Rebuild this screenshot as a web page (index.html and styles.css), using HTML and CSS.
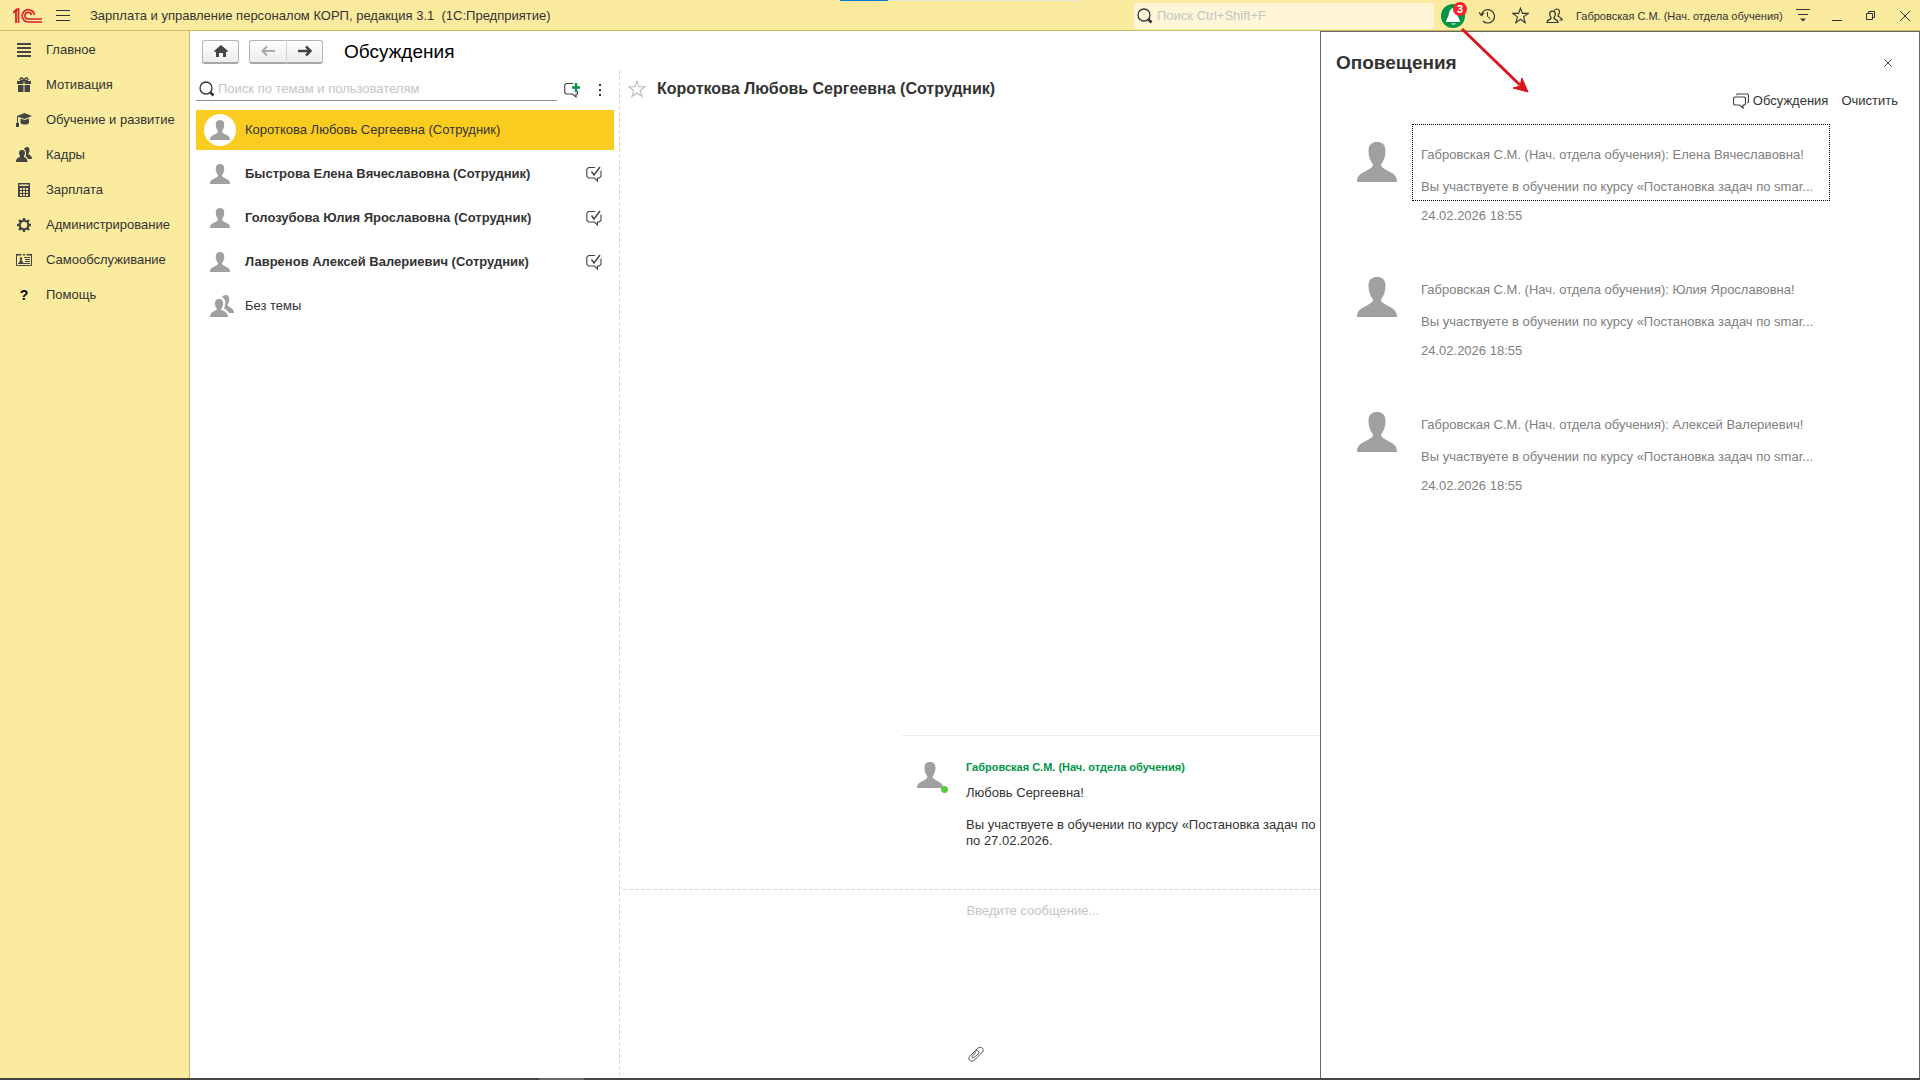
FILE: index.html
```html
<!DOCTYPE html>
<html lang="ru">
<head>
  <meta charset="UTF-8">
  <meta name="viewport" content="width=device-width, initial-scale=1.0">
  <title>Зарплата и управление персоналом КОРП, редакция 3.1</title>
  <link rel="stylesheet" href="styles.css">
</head>
<body>
  <svg class="sprite" aria-hidden="true">
    <symbol id="person" viewBox="0 0 40 40">
      <path d="M20 0c5 0 8.500 2.500 8.500 9c0 6-2 10-4.500 13.500c0 2 1.500 3.500 4.500 5C36 31.500 40 33 40 40H0c0-7 4-8.500 11.500-12.500c3-1.500 4.500-3 4.500-5c-2.500-3.500-4.500-7.500-4.500-13.500c0-6.500 3.500-9 8.500-9z"/>
    </symbol>
    <symbol id="loupe" viewBox="0 0 16 16">
      <circle cx="7" cy="7" r="6" fill="none" stroke="currentColor" stroke-width="1.300"/>
      <path d="M11.500 11.500L14.500 14.500" stroke="currentColor" stroke-width="2.500"/>
    </symbol>
    <symbol id="star" viewBox="0 0 16 16">
      <path d="M8 1l1.800 5h5.400l-4.300 3.300l1.500 5.400L8 11.500l-4.400 3.200l1.500-5.400L.8 6h5.400z" fill="none" stroke="currentColor"/>
    </symbol>
    <symbol id="bubble-check" viewBox="0 0 16 16">
      <path d="M9 1.500H2.500L.8 3.200V10.300L2.500 12H8.500L11.500 15V12H13.300L15 10.300V4.500" fill="none" stroke="currentColor" stroke-width="1.100"/>
      <path d="M5.500 5.500l2.500 3.500L14 1" fill="none" stroke="currentColor" stroke-width="1.500"/>
    </symbol>
  </svg>

  <header class="titlebar">
    <svg class="logo" viewBox="0 0 30 16" fill="none" stroke="#d8232a">
      <path d="M0 5l3-3v13M3 2.500L5.500 1v14" stroke-width="1.800"/>
      <path d="M21.500 7A6.200 6.200 0 1 0 15 14H29" stroke-width="1.700"/>
      <path d="M18.500 7A3.300 3.300 0 1 0 15 11H29" stroke-width="1.700"/>
    </svg>
    <button class="icon-btn menu-btn" aria-label="Главное меню">
      <svg width="14" height="12" viewBox="0 0 14 12"><path d="M0 .5h14M0 5.500h14M0 10.500h14" stroke="#333"/></svg>
    </button>
    <span class="app-name">Зарплата и управление персоналом КОРП, редакция 3.1&nbsp; (1С:Предприятие)</span>
    <div class="progress"><span></span></div>
    <label class="global-search">
      <svg width="16" height="16"><use href="#loupe"/></svg>
      <input type="text" placeholder="Поиск Ctrl+Shift+F" aria-label="Поиск">
    </label>
    <div class="title-tools">
      <button class="bell" aria-label="Оповещения">
        <svg width="24" height="24" viewBox="0 0 24 24">
          <circle cx="12" cy="12" r="12" fill="#009646"/>
          <path d="M12 4c-3 1-4 4-4.500 7.500L5 17v1h14v-1l-2.500-5.500C16 8 15 5 12 4zM10 19.500h5c-1 1.500-4 1.500-5 0z" fill="#fff"/>
        </svg>
        <span class="badge">3</span>
      </button>
      <button class="icon-btn" aria-label="История">
        <svg width="16" height="16" viewBox="0 0 16 16" fill="none" stroke="#333">
          <path d="M2.500 6A6.700 6.700 0 1 1 4 13" stroke-width="1.200"/><path d="M0 4.500l2.500 3L5 5" stroke-width="1.200"/><path d="M8.500 4v4.500l3 2.500"/>
        </svg>
      </button>
      <button class="icon-btn" aria-label="Избранное"><svg width="17" height="17"><use href="#star"/></svg></button>
      <button class="icon-btn" aria-label="Пользователи">
        <svg width="17" height="16" viewBox="0 0 17 16" fill="none" stroke="#333" stroke-width="1.200">
          <path d="M6.500 3.200c2 0 2.800 1 2.800 2.800S8.500 9 8 9.500v1.200c3 1.300 4 1.600 4 3.800H1c0-2.200 1-2.500 4-3.800V9.500C4.500 9 3.700 7.800 3.700 6s.8-2.800 2.800-2.800z"/>
          <path d="M8 2.500C8.600 1.500 9.500 1 10.800 1c2 0 2.700 1.300 2.700 3s-.8 2.500-1.300 3v1.500c2.500 1.200 4 1.500 4 3.500H13.500"/>
        </svg>
      </button>
      <a class="user" href="#">Габровская С.М. (Нач. отдела обучения)</a>
      <button class="icon-btn" aria-label="Настройки">
        <svg width="14" height="13" viewBox="0 0 14 13"><path d="M0 .5h14M2 5.500h10" stroke="#333"/><path d="M4 9.500h6l-3 3z" fill="#333"/></svg>
      </button>
    </div>
    <div class="window-tools">
      <button class="icon-btn" aria-label="Свернуть"><svg width="10" height="10"><path d="M0 9.500h10" stroke="#333"/></svg></button>
      <button class="icon-btn" aria-label="Развернуть"><svg width="10" height="10" fill="none" stroke="#333"><path d="M.5 2.500h6v6h-6zM2.500 2.500v-2h6v6h-2"/></svg></button>
      <button class="icon-btn" aria-label="Закрыть"><svg width="10" height="10"><path d="M0 0l10 10M10 0L0 10" stroke="#333"/></svg></button>
    </div>
  </header>

  <div class="workspace">
    <nav class="sections">
      <a href="#">
        <svg viewBox="0 0 16 16"><path d="M1 2h14M1 6h14M1 10h14M1 14h14" stroke="#444" stroke-width="2"/></svg>Главное</a>
      <a href="#">
        <svg viewBox="0 0 16 16"><path d="M1 4h6.500v3H1zM8.500 4H15v3H8.500zM2 8h5.500v7H2zM8.500 8H14v7H8.500z"/><path d="M7.500 3.500C5 4 3.500 3 4.500 1.500S7 1.500 8 3.500c1-2 2.500-3.500 3.500-2S11 4 8.500 3.500" fill="none" stroke="#444" stroke-width="1.500"/></svg>Мотивация</a>
      <a href="#">
        <svg viewBox="0 0 16 16"><path d="M8.500 1L16 4l-7.500 3L2 4.800V11h1v4H0v-4h1V4z"/><path d="M4.500 6.500l4 1.500l4.500-1.500V11c-1.500 2-6.500 2-8.500 0z"/></svg>Обучение и развитие</a>
      <a href="#">
        <svg viewBox="0 0 16 16"><path d="M6 3c2.200 0 3 1.300 3 3S8 8.500 8 9v1c2.500 1 3.500 2 3.500 5H0c0-3 1-4 4-5V9C4 8.500 3 7.700 3 6s.8-3 3-3z"/><path d="M8 2c.5-1 1.500-2 3-2c2 0 2.500 1.500 2.500 3S13 5.500 12.500 6.500v1c2.500 1 3.500 2 3.500 4.500h-4c-.5-1.500-1.500-2-2.500-2.700C10.500 7 10.500 3.500 8 2z"/></svg>Кадры</a>
      <a href="#">
        <svg viewBox="0 0 16 16"><path d="M2 1h12v14H2z"/><path d="M3.500 2.500h9v1.500h-9zM4 6h2v2H4zM7 6h2v2H7zM10 6h2v2h-2zM4 9h2v2H4zM7 9h2v2H7zM10 9h2v2h-2zM4 12h2v2H4zM7 12h2v2H7zM10 12h2v2h-2z" fill="#fbeb9e"/></svg>Зарплата</a>
      <a href="#">
        <svg viewBox="0 0 16 16" fill="none" stroke="#444"><circle cx="8" cy="8" r="4.300" stroke-width="2.200"/><path d="M8 1v2.500M8 12.500V15M1 8h2.500M12.500 8H15M3 3l1.800 1.800M11.200 11.200L13 13M13 3l-1.800 1.800M4.800 11.200L3 13" stroke-width="2.400"/></svg>Администрирование</a>
      <a href="#">
        <svg viewBox="0 0 16 16"><path d="M.5 3v10.500h15V3M8 5.500h6M9 7.500h5M9 9.500h5M2 11.500h12" fill="none" stroke="#444"/><path d="M3 11c0-2 1-2 1.500-2.500C3.500 7.500 3.500 5 5 5s1.500 2.500.500 3.500C6 9 7 9 7 11zM0 2h5.500v1.500H0zM7 2h2v1.500H7zM10.500 2H16v1.500h-5.500z"/></svg>Самообслуживание</a>
      <a href="#"><b>?</b>Помощь</a>
    </nav>

    <main class="page">
      <div class="page-head">
        <button class="tool-btn" aria-label="Домой"><svg width="14" height="14" viewBox="0 0 14 14"><path d="M7 1l7 6l-1 1.200L12 7.500V13H9V9H5v4H2V7.500L1 8.200L0 7z" fill="#444"/></svg></button>
        <div class="tool-group">
          <button class="tool-btn" aria-label="Назад"><svg width="14" height="12" viewBox="0 0 14 12"><path d="M6 1.500L1.500 6L6 10.500M2 6h12" fill="none" stroke="#aaa" stroke-width="2"/></svg></button>
          <button class="tool-btn" aria-label="Вперед"><svg width="14" height="12" viewBox="0 0 14 12"><path d="M8 1.500l4.500 4.500L8 10.500M12 6H0" fill="none" stroke="#444" stroke-width="2.500"/></svg></button>
        </div>
        <h1>Обсуждения</h1>
      </div>

      <div class="columns">
        <section class="threads">
          <div class="thread-search">
            <label>
              <svg width="16" height="16"><use href="#loupe"/></svg>
              <input type="text" placeholder="Поиск по темам и пользователям" aria-label="Поиск по темам">
            </label>
            <button class="icon-btn" aria-label="Новое обсуждение">
              <svg width="16" height="16" viewBox="0 0 16 16"><path d="M9 1.500H2.200L.7 3v7.500L2.200 12H8.500l3.500 3v-3h1.500V9" fill="none" stroke="#444" stroke-width="1.100"/><path d="M12 1v9M8 5.500h8" stroke="#009646" stroke-width="2.400"/></svg>
            </button>
            <button class="icon-btn more" aria-label="Еще">
              <svg width="4" height="12" fill="#333"><path d="M1 0h2v2H1zM1 5h2v2H1zM1 10h2v2H1z"/></svg>
            </button>
          </div>
          <ul>
            <li class="active"><span class="face"><svg><use href="#person"/></svg></span><span>Короткова Любовь Сергеевна (Сотрудник)</span></li>
            <li class="unread"><span class="face"><svg><use href="#person"/></svg></span><span>Быстрова Елена Вячеславовна (Сотрудник)</span><svg class="mark"><use href="#bubble-check"/></svg></li>
            <li class="unread"><span class="face"><svg><use href="#person"/></svg></span><span>Голозубова Юлия Ярославовна (Сотрудник)</span><svg class="mark"><use href="#bubble-check"/></svg></li>
            <li class="unread"><span class="face"><svg><use href="#person"/></svg></span><span>Лавренов Алексей Валериевич (Сотрудник)</span><svg class="mark"><use href="#bubble-check"/></svg></li>
            <li>
              <span class="face group">
                <svg viewBox="0 0 24 22"><path d="M9 4c3 0 4 1.500 4 4.500S12 13 11 14c0 2 7 2 7 8H0c0-6 7-6 7-8C6 13 5 11.500 5 8.500S6 4 9 4z"/><path d="M12 2c1-1.300 2-2 3.500-2c3 0 3.700 2 3.700 4.500S18 8.500 17.500 10c0 2 6.500 2.500 6.500 8h-5c-1-2.500-3-3.500-5-4.500C16 9 16 4 12 2z"/></svg>
              </span>
              <span>Без темы</span>
            </li>
          </ul>
        </section>

        <section class="chat">
          <div class="chat-head">
            <button class="icon-btn" aria-label="В избранное"><svg width="18" height="18"><use href="#star"/></svg></button>
            <h2>Короткова Любовь Сергеевна (Сотрудник)</h2>
          </div>
          <div class="feed">
            <article class="message">
              <span class="avatar"><svg><use href="#person"/></svg><i></i></span>
              <div>
                <h3>Габровская С.М. (Нач. отдела обучения)</h3>
                <p>Любовь Сергеевна!<br><br>Вы участвуете в обучении по курсу «Постановка задач по<br>по 27.02.2026.</p>
              </div>
            </article>
          </div>
          <div class="composer">
            <div class="composer-inner">
              <textarea placeholder="Введите сообщение..." aria-label="Сообщение"></textarea>
              <button class="icon-btn" aria-label="Прикрепить файл">
                <svg width="18" height="18" viewBox="0 0 18 18"><path d="M5 9l5.500-5.500c3-3 7.500 0 5 3.500L7.500 15c-3 3-7.500 0-5-3.500l6-5.500c2-1.700 4.500.5 3 2.500L7 12.500c-1 1-2.500 0-1.800-1.300L9 7.500" fill="none" stroke="#555"/></svg>
              </button>
            </div>
          </div>
        </section>
      </div>
    </main>

    <aside class="alerts">
      <div class="alerts-head">
        <h2>Оповещения</h2>
        <button class="icon-btn" aria-label="Закрыть"><svg width="8" height="8"><path d="M.5 .5l7 7M7.500 .5l-7 7" stroke="#444"/></svg></button>
      </div>
      <div class="alerts-tools">
        <a href="#"><svg width="16" height="16" viewBox="0 0 16 16" fill="none" stroke="#444" stroke-width="1.200"><path d="M1.500 4h10l1 1v6l-1 1H10v3l-3.500-3h-5l-1-1V5z"/><path d="M3.500 2l1-1h10l1 1v7l-1 1"/></svg>Обсуждения</a>
        <a href="#">Очистить</a>
      </div>
      <article class="alert">
        <svg><use href="#person"/></svg>
        <div>
          <a class="alert-text focused" href="#"><span>Габровская С.М. (Нач. отдела обучения): Елена Вячеславовна!</span><span>Вы участвуете в обучении по курсу «Постановка задач по smar...</span></a>
          <time>24.02.2026 18:55</time>
        </div>
      </article>
      <article class="alert">
        <svg><use href="#person"/></svg>
        <div>
          <a class="alert-text" href="#"><span>Габровская С.М. (Нач. отдела обучения): Юлия Ярославовна!</span><span>Вы участвуете в обучении по курсу «Постановка задач по smar...</span></a>
          <time>24.02.2026 18:55</time>
        </div>
      </article>
      <article class="alert">
        <svg><use href="#person"/></svg>
        <div>
          <a class="alert-text" href="#"><span>Габровская С.М. (Нач. отдела обучения): Алексей Валериевич!</span><span>Вы участвуете в обучении по курсу «Постановка задач по smar...</span></a>
          <time>24.02.2026 18:55</time>
        </div>
      </article>
    </aside>

    <svg class="pointer" width="70" height="68" viewBox="0 0 70 68">
      <path d="M2 2L60 58" stroke="#d8181c" stroke-width="3"/>
      <path d="M68 65l-15-4l7-2l2-8z" fill="#d8181c" stroke="#d8181c"/>
    </svg>
  </div>
  <footer class="taskbar"><span></span></footer>
</body>
</html>
```
FILE: styles.css
```css
:root {
  --yellow: #fbeb9e;
  --yellow-line: #c9b964;
  --accent: #fbcc20;
  --text: #333;
  --muted: #808080;
  --hint: #c4c4c8;
  --grey: #a0a0a0;
  --line: #666;
}
* {
  box-sizing: border-box;
}
body {
  margin: 0;
  min-height: 100vh;
  display: flex;
  flex-direction: column;
  overflow: hidden;
  background: #fff;
  color: var(--text);
  font: 13px/16px "Liberation Sans", Arial, sans-serif;
}
h1, h2, h3, p, ul {
  margin: 0;
  padding: 0;
}
a {
  color: inherit;
  text-decoration: none;
}
svg {
  display: block;
  flex: none;
}
button {
  padding: 0;
  border: 0;
  background: none;
  font: inherit;
  color: inherit;
  cursor: pointer;
}
input, textarea {
  flex: 1;
  min-width: 0;
  padding: 0;
  border: 0;
  outline: 0;
  background: none;
  font: inherit;
  color: inherit;
  resize: none;
}
input::placeholder, textarea::placeholder {
  color: var(--hint);
  opacity: 1;
}
.sprite {
  position: absolute;
  width: 0;
  height: 0;
}
.icon-btn {
  display: flex;
  align-items: center;
  justify-content: center;
}

/* title bar */
.titlebar {
  position: relative;
  display: flex;
  align-items: center;
  height: 31px;
  padding: 1px 10px 0 13px;
  background: var(--yellow);
  border-bottom: 1px solid var(--yellow-line);
}
.logo {
  width: 30px;
  height: 16px;
}
.menu-btn {
  margin: 0 20px 0 13px;
}
.progress {
  position: absolute;
  top: 0;
  left: 840px;
  width: 241px;
  height: 1px;
  background: #e4e4dc;
}
.progress span {
  display: block;
  width: 20%;
  height: 1px;
  background: #0078d7;
}
.global-search {
  display: flex;
  align-items: center;
  gap: 4px;
  width: 300px;
  height: 26px;
  margin-left: auto;
  padding: 0 3px;
  border-radius: 3px;
  background: #fef6d6;
}
.title-tools {
  display: flex;
  align-items: center;
  gap: 17px;
  margin-left: 7px;
}
.title-tools .user {
  width: 206px;
  margin: 0 -3px 0 -4px;
  font-size: 11px;
  white-space: nowrap;
}
.bell {
  position: relative;
  margin-right: -3px;
}
.badge {
  position: absolute;
  top: -2px;
  left: 12px;
  width: 14px;
  height: 14px;
  border-radius: 50%;
  background: #f8252c;
  color: #fff;
  font: bold 11px/14px "Liberation Sans", Arial, sans-serif;
}
.window-tools {
  display: flex;
  gap: 24px;
  margin-left: 22px;
}

.workspace {
  position: relative;
  display: flex;
  flex: 1;
}

/* sections */
.sections {
  width: 190px;
  padding-top: 1px;
  background: var(--yellow);
  border-right: 1px solid var(--yellow-line);
}
.sections a {
  display: flex;
  align-items: center;
  gap: 14px;
  height: 35px;
  padding-left: 16px;
}
.sections svg {
  width: 16px;
  height: 16px;
  fill: #444;
}
.sections svg[fill="none"] {
  fill: none;
}
.sections b {
  width: 16px;
  font-size: 14px;
  text-align: center;
  color: #000;
}

/* page */
.page {
  display: flex;
  flex: 1;
  flex-direction: column;
  min-width: 0;
}
.page-head {
  display: flex;
  align-items: center;
  gap: 10px;
  height: 39px;
  padding: 2px 0 0 12px;
}
.page-head h1 {
  margin-left: 11px;
  font-size: 19px;
  line-height: 24px;
  font-weight: normal;
  color: #000;
}
.tool-btn {
  display: flex;
  align-items: center;
  justify-content: center;
  width: 37px;
  height: 24px;
  border: 1px solid #b4b4b4;
  border-bottom: 2px solid #a8a8a8;
  border-radius: 3px;
  background: linear-gradient(#fff, #ececec);
}
.tool-group {
  display: flex;
}
.tool-group .tool-btn:first-child {
  border-right: 0;
  border-radius: 3px 0 0 3px;
}
.tool-group .tool-btn:last-child {
  border-left-color: #d0d0d0;
  border-radius: 0 3px 3px 0;
}
.columns {
  display: flex;
  flex: 1;
}

/* thread list */
.threads {
  width: 430px;
  padding: 8px 6px 0;
  background: repeating-linear-gradient(#d8d8d8 0 4px, #fff 4px 6px) right top / 1px 100% no-repeat;
}
.thread-search {
  display: flex;
  align-items: center;
  height: 23px;
}
.thread-search label {
  display: flex;
  align-items: center;
  gap: 3px;
  width: 361px;
  height: 23px;
  padding-left: 3px;
  border-bottom: 1px solid #909090;
}
.thread-search .icon-btn {
  margin-left: 7px;
}
.thread-search .more {
  margin-left: 18px;
}
.threads ul {
  display: flex;
  flex-direction: column;
  gap: 4px;
  margin-top: 9px;
  list-style: none;
}
.threads li {
  display: flex;
  align-items: center;
  gap: 9px;
  height: 40px;
  padding: 0 12px 0 8px;
  line-height: 18px;
}
.threads .active {
  background: var(--accent);
}
.threads .unread {
  font-weight: bold;
}
.face {
  display: flex;
  align-items: center;
  justify-content: center;
  width: 32px;
  height: 32px;
  border-radius: 50%;
  background: #fff;
}
.face svg {
  width: 20px;
  height: 20px;
  fill: var(--grey);
}
.face.group {
  justify-content: flex-end;
  padding-right: 2px;
}
.face.group svg {
  width: 24px;
  height: 22px;
}
.mark {
  width: 16px;
  height: 16px;
  margin-left: auto;
  color: #444;
}

/* chat */
.chat {
  display: flex;
  flex: 1;
  flex-direction: column;
  min-width: 0;
}
.chat-head {
  display: flex;
  align-items: center;
  gap: 11px;
  height: 37px;
  padding-left: 8px;
}
.chat-head .icon-btn {
  color: #b8bcc4;
}
.chat-head h2 {
  font-size: 16px;
  line-height: 20px;
}
.feed {
  display: flex;
  flex: 1;
  flex-direction: column;
  justify-content: flex-end;
}
.message {
  display: flex;
  gap: 23px;
  width: 736px;
  height: 154px;
  margin: 0 auto;
  padding: 23px 0 0 15px;
  border-top: 1px solid #ececec;
}
.message h3 {
  margin-bottom: 10px;
  font-size: 11px;
  line-height: 16px;
  color: #009646;
}
.message p {
  white-space: nowrap;
}
.avatar {
  position: relative;
  width: 26px;
  height: 26px;
  margin-top: 3px;
}
.avatar svg {
  width: 26px;
  height: 26px;
  fill: var(--grey);
}
.avatar i {
  position: absolute;
  right: -5px;
  bottom: -5px;
  width: 7px;
  height: 7px;
  border-radius: 50%;
  background: #5cc83c;
}
.composer {
  margin-left: 3px;
  height: 189px;
  background: repeating-linear-gradient(90deg, #d8d8d8 0 4px, #fff 4px 6px) left top / 100% 1px no-repeat;
}
.composer-inner {
  display: flex;
  flex-direction: column;
  align-items: flex-start;
  width: 736px;
  height: 100%;
  margin: 0 auto;
  padding: 14px 0 15px 63px;
}
.composer textarea {
  width: 100%;
}

/* notifications drawer */
.alerts {
  position: absolute;
  top: 0;
  right: 0;
  bottom: 0;
  width: 600px;
  border: 1px solid var(--line);
  border-bottom: 0;
  background: #fff;
}
.alerts-head {
  display: flex;
  align-items: center;
  justify-content: space-between;
  height: 61px;
  padding: 0 27px 0 15px;
}
.alerts-head h2 {
  font-size: 19px;
  line-height: 24px;
}
.alerts-tools {
  display: flex;
  justify-content: flex-end;
  gap: 13px;
  height: 31px;
  padding-right: 21px;
}
.alerts-tools a {
  display: flex;
  align-items: flex-start;
  gap: 4px;
  height: 16px;
}
.alert {
  display: flex;
  gap: 15px;
  height: 135px;
  padding-left: 36px;
  color: var(--muted);
}
.alert > svg {
  width: 40px;
  height: 40px;
  margin-top: 18px;
  fill: var(--grey);
}
.alert-text {
  display: flex;
  flex-direction: column;
  gap: 16px;
  width: 418px;
  height: 77px;
  padding: 22px 0 0 8px;
  border: 1px solid transparent;
  white-space: nowrap;
}
.alert-text.focused {
  border: 1px dotted #000;
}
.alert time {
  display: block;
  margin-top: 7px;
  padding-left: 9px;
}
.pointer {
  position: absolute;
  top: -4px;
  right: 390px;
}

.taskbar {
  height: 2px;
  padding-left: 539px;
  background: #464444;
}
.taskbar span {
  display: block;
  width: 45px;
  height: 2px;
  background: #6a6868;
}
```
